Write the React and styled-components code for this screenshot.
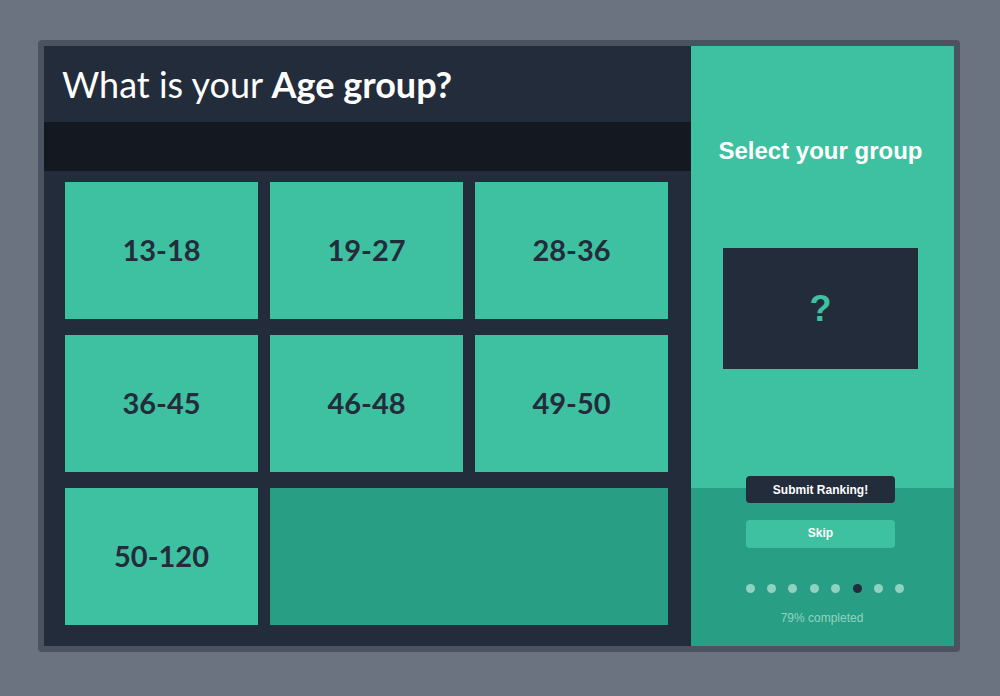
import React from "react";
import styled, { createGlobalStyle } from "styled-components";

const GlobalStyle = createGlobalStyle`
  html, body {
    margin: 0;
    padding: 0;
    background: #6b7280;
  }
  * {
    box-sizing: border-box;
  }
`;

const Page = styled.div`
  width: 1000px;
  height: 696px;
  padding: 40px 0 0 38px;
`;

const Frame = styled.div`
  display: flex;
  width: 922px;
  height: 612px;
  border: 6px solid #4b5361;
  border-radius: 4px;
  background: #232c3b;
`;

const LeftPanel = styled.div`
  display: flex;
  flex-direction: column;
  width: 647px;
  background: #232c3b;
`;

const Header = styled.div`
  display: flex;
  align-items: center;
  height: 76px;
  padding-left: 18px;
  font-family: Lato, "Noto Sans", sans-serif;
  font-size: 36px;
  color: #ffffff;
  b {
    font-weight: 700;
  }
`;

const DarkBar = styled.div`
  height: 49px;
  background: #141820;
`;

const Grid = styled.div`
  display: grid;
  grid-template-columns: repeat(3, 193px);
  grid-auto-rows: 137px;
  column-gap: 12px;
  row-gap: 16px;
  padding: 11px 23px 21px 21px;
`;

const Tile = styled.div`
  display: flex;
  align-items: center;
  justify-content: center;
  padding-bottom: 3px;
  grid-column: span ${(p) => p.$span || 1};
  background: ${(p) => (p.$empty ? "#289f84" : "#3ec1a0")};
  font-family: Lato, "Noto Sans", sans-serif;
  font-weight: 700;
  font-size: 29px;
  color: #232c3b;
  cursor: pointer;
`;

const RightPanel = styled.div`
  display: flex;
  flex-direction: column;
  width: 263px;
`;

const TopSection = styled.div`
  display: flex;
  flex-direction: column;
  align-items: center;
  height: 442px;
  padding: 91px 4px 0 0;
  background: #3ec1a0;
`;

const Title = styled.h2`
  margin: 0;
  font-family: "Liberation Sans", Arial, sans-serif;
  font-weight: 700;
  font-size: 24px;
  line-height: 28px;
  color: #ffffff;
`;

const QuestionBox = styled.div`
  display: flex;
  align-items: center;
  justify-content: center;
  width: 195px;
  height: 121px;
  margin-top: 83px;
  background: #232c3b;
  font-family: "Liberation Sans", Arial, sans-serif;
  font-weight: 700;
  font-size: 36px;
  color: #3ec1a0;
`;

const BottomSection = styled.div`
  flex: 1;
  display: flex;
  flex-direction: column;
  align-items: center;
  padding-right: 4px;
  background: #289f84;
`;

const Button = styled.button`
  width: 149px;
  height: ${(p) => (p.$primary ? "27px" : "28px")};
  margin-top: ${(p) => (p.$primary ? "-12px" : "17px")};
  padding: 0 0 ${(p) => (p.$primary ? "0" : "3px")};
  border: none;
  border-radius: 4px;
  background: ${(p) => (p.$primary ? "#232c3b" : "#3ec1a0")};
  color: #ffffff;
  font-family: "Liberation Sans", Arial, sans-serif;
  font-weight: 700;
  font-size: 12px;
  cursor: pointer;
`;

const Dots = styled.div`
  display: flex;
  gap: 12.4px;
  margin: 36px 0 0 9px;
`;

const Dot = styled.span`
  width: 9px;
  height: 9px;
  border-radius: 50%;
  background: ${(p) => (p.$active ? "#232c3b" : "#8fd2c1")};
`;

const Progress = styled.div`
  margin: 18px 0 0 3px;
  font-family: "Liberation Sans", Arial, sans-serif;
  font-size: 12px;
  line-height: 14px;
  color: #8fd3c2;
`;

const groups = ["13-18", "19-27", "28-36", "36-45", "46-48", "49-50", "50-120"];

export default function App() {
  return (
    <>
      <GlobalStyle />
      <Page>
        <Frame>
          <LeftPanel>
            <Header>
              What is your&nbsp;<b>Age group?</b>
            </Header>
            <DarkBar />
            <Grid>
              {groups.map((g) => (
                <Tile key={g}>{g}</Tile>
              ))}
              <Tile $empty $span={2} />
            </Grid>
          </LeftPanel>
          <RightPanel>
            <TopSection>
              <Title>Select your group</Title>
              <QuestionBox>?</QuestionBox>
            </TopSection>
            <BottomSection>
              <Button $primary>Submit Ranking!</Button>
              <Button>Skip</Button>
              <Dots>
                {[0, 1, 2, 3, 4, 5, 6, 7].map((i) => (
                  <Dot key={i} $active={i === 5} />
                ))}
              </Dots>
              <Progress>79% completed</Progress>
            </BottomSection>
          </RightPanel>
        </Frame>
      </Page>
    </>
  );
}
